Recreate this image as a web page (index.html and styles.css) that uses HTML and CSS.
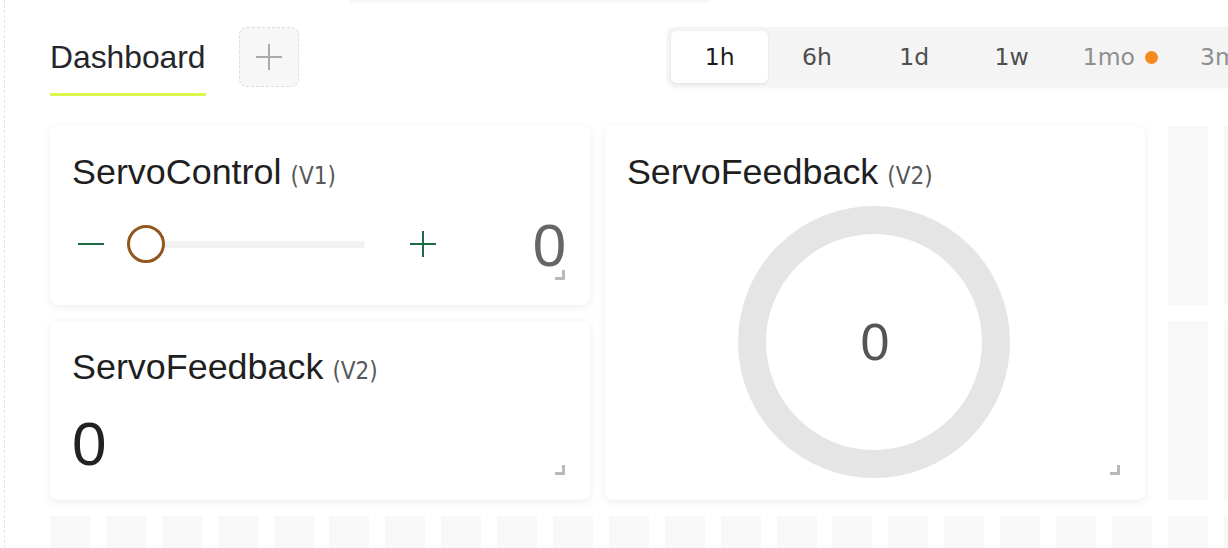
FILE: index.html
```html
<!DOCTYPE html>
<html lang="en">
<head>
<meta charset="utf-8">
<title>Dashboard</title>
<link rel="stylesheet" href="styles.css">
</head>
<body>
<div class="page">
  <div class="topfade"></div>
  <header class="header">
    <div class="tab"><span class="tab-label">Dashboard</span></div>
    <button class="add-btn" aria-label="Add tab">
      <svg width="26" height="26" viewBox="0 0 26 26"><path d="M13 0V26M0 13H26" stroke="#ababab" stroke-width="2" fill="none"/></svg>
    </button>
    <div class="ranges">
      <button class="range active">1h</button>
      <button class="range">6h</button>
      <button class="range">1d</button>
      <button class="range">1w</button>
      <button class="range muted with-dot">1mo<span class="dot"></span></button>
      <button class="range muted">3mo</button>
    </div>
  </header>

  <main class="grid">
    <section class="card card-control">
      <h2 class="card-title">ServoControl <span class="pin">(V1)</span></h2>
      <div class="control-row">
        <button class="step-btn" aria-label="Decrease">
          <svg width="26" height="26" viewBox="0 0 26 26"><path d="M0 13H26" stroke="#1d6a47" stroke-width="2" fill="none"/></svg>
        </button>
        <div class="slider">
          <div class="track"></div>
          <div class="thumb"></div>
        </div>
        <button class="step-btn plus" aria-label="Increase">
          <svg width="26" height="26" viewBox="0 0 26 26"><path d="M13 0V26M0 13H26" stroke="#1d6a47" stroke-width="2" fill="none"/></svg>
        </button>
        <div class="control-value">0</div>
      </div>
      <span class="resize"></span>
    </section>

    <section class="card card-value">
      <h2 class="card-title">ServoFeedback <span class="pin">(V2)</span></h2>
      <div class="big-value">0</div>
      <span class="resize"></span>
    </section>

    <section class="card card-gauge">
      <h2 class="card-title">ServoFeedback <span class="pin">(V2)</span></h2>
      <div class="gauge">
        <svg width="272" height="272" viewBox="0 0 272 272">
          <circle cx="136" cy="136" r="122" fill="none" stroke="#e5e5e5" stroke-width="28"/>
          <text x="137" y="154" text-anchor="middle" class="gauge-text">0</text>
        </svg>
      </div>
      <span class="resize"></span>
    </section>

    <div class="cell"></div><div class="cell"></div>
    <div class="cell"></div><div class="cell"></div>
    <div class="cell"></div><div class="cell"></div><div class="cell"></div><div class="cell"></div>
    <div class="cell"></div><div class="cell"></div><div class="cell"></div><div class="cell"></div>
    <div class="cell"></div><div class="cell"></div><div class="cell"></div><div class="cell"></div>
    <div class="cell"></div><div class="cell"></div><div class="cell"></div><div class="cell"></div>
    <div class="cell"></div><div class="cell"></div><div class="cell"></div><div class="cell"></div>
    <div class="cell"></div><div class="cell"></div>
  </main>
</div>
</body>
</html>
```

FILE: styles.css
```css
* { box-sizing: border-box; }

html, body {
  margin: 0;
  padding: 0;
  background: #ffffff;
  overflow: hidden;
  height: 548px;
}

body {
  font-family: "Liberation Sans", Arial, sans-serif;
  color: #222;
}

.page {
  margin-left: 4px;
  border-left: 1px dashed #e4e4e4;
  padding-left: 45px;
  height: 548px;
  overflow: hidden;
}

.topfade {
  height: 3px;
  margin-left: 300px;
  width: 360px;
  background: linear-gradient(to bottom, #f3f3f3, #fcfcfc);
  border-radius: 0 0 4px 4px;
}

.header {
  display: flex;
  align-items: flex-start;
  margin-top: 24px;
  height: 69px;
  white-space: nowrap;
}

.tab {
  flex: none;
  margin-top: 12px;
  padding-bottom: 17px;
  border-bottom: 3px solid #d8f84c;
  width: 156px;
}

.tab-label {
  display: block;
  font-size: 31.8px;
  line-height: 37px;
  color: #26262a;
}

.add-btn {
  flex: none;
  margin-left: 33px;
  width: 60px;
  height: 60px;
  background: #f7f7f7;
  border: 1px dashed #dedede;
  border-radius: 8px;
  display: flex;
  align-items: center;
  justify-content: center;
  padding: 0;
}

.add-btn svg { display: block; }

.ranges {
  margin-left: 368px;
  flex: none;
  display: flex;
  height: 60px;
  padding: 4px;
  background: #f4f4f4;
  border-radius: 8px;
  box-shadow: 0 1px 3px rgba(0, 0, 0, 0.05);
}

.range {
  flex: none;
  position: relative;
  width: 97.3px;
  height: 52px;
  border: 0;
  background: transparent;
  border-radius: 6px;
  font-family: "DejaVu Sans", sans-serif;
  font-size: 23.5px;
  line-height: 50px;
  color: #4d4d4d;
  padding: 0;
}

.range.active {
  background: #ffffff;
  color: #1b1b1b;
  box-shadow: 0 1px 3px rgba(0, 0, 0, 0.08);
}

.range.muted { color: #8e8e8e; }

.range.with-dot {
  width: 117.3px;
  padding-right: 20px;
}

.dot {
  position: absolute;
  left: 85px;
  top: 20px;
  width: 13px;
  height: 13px;
  border-radius: 50%;
  background: #f58a1f;
}

.grid {
  margin-top: 30px;
  display: grid;
  grid-template-columns: repeat(22, 40px);
  grid-template-rows: repeat(3, 179px);
  column-gap: 15.9px;
  row-gap: 16px;
}

.cell {
  background: #f8f8f8;
}

.card {
  position: relative;
  background: #ffffff;
  border-radius: 8px;
  box-shadow: 0 2px 10px rgba(0, 0, 0, 0.075);
  padding: 26px 24px 0 22px;
  width: 540px;
  justify-self: start;
  z-index: 1;
}

.card-control { grid-column: 1 / span 10; grid-row: 1; }
.card-value { grid-column: 1 / span 10; grid-row: 2; }
.card-gauge { grid-column: 11 / span 10; grid-row: 1 / span 2; margin-left: -4px; }

.card-title {
  margin: 0;
  display: flex;
  align-items: baseline;
  gap: 9px;
  height: 40px;
  font-weight: normal;
  font-size: 35.9px;
  line-height: 40px;
  color: #1f1f1f;
  white-space: nowrap;
}

.pin {
  font-family: "DejaVu Sans Condensed", "DejaVu Sans", sans-serif;
  font-stretch: condensed;
  font-size: 24px;
  line-height: 24px;
  color: #585858;
}

.control-row {
  margin-top: 21px;
  height: 62px;
  display: flex;
  align-items: center;
}

.step-btn {
  width: 37px;
  height: 37px;
  padding: 0;
  border: 0;
  background: transparent;
  display: flex;
  align-items: center;
  justify-content: center;
  flex: none;
}

.step-btn svg { display: block; }

.slider {
  position: relative;
  margin-left: 18px;
  width: 238px;
  height: 38px;
  display: flex;
  align-items: center;
  flex: none;
}

.track {
  width: 100%;
  height: 7px;
  background: #f2f2f2;
  border-radius: 2px;
}

.thumb {
  position: absolute;
  left: 0;
  top: 0;
  width: 38px;
  height: 38px;
  border-radius: 50%;
  border: 3px solid #92571c;
  background: #ffffff;
}

.step-btn.plus { margin-left: 39px; }

.control-value {
  flex: 1;
  text-align: right;
  font-size: 60px;
  line-height: 58px;
  padding-top: 4px;
  color: #666666;
}

.big-value {
  margin-top: 25px;
  font-size: 62px;
  line-height: 64px;
  color: #222222;
}

.gauge {
  margin-top: 14px;
  display: flex;
  justify-content: center;
}

.gauge svg { display: block; }

.gauge-text {
  font-family: "Liberation Sans", Arial, sans-serif;
  font-size: 52px;
  fill: #555555;
}

.resize {
  position: absolute;
  right: 25px;
  bottom: 25px;
  width: 10px;
  height: 10px;
  border-right: 3px solid #b9b9b9;
  border-bottom: 3px solid #b9b9b9;
}
```
